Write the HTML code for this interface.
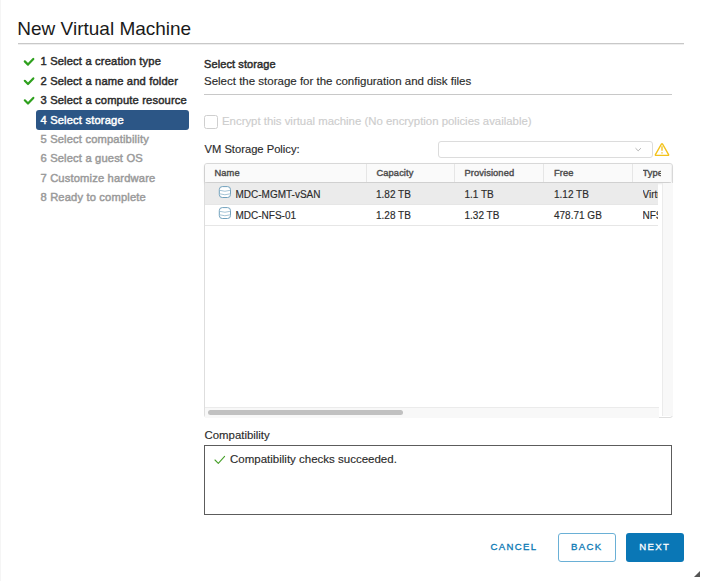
<!DOCTYPE html>
<html><head><meta charset="utf-8">
<style>
html,body{margin:0;padding:0;background:#fff;}
body{width:703px;height:581px;position:relative;overflow:hidden;font-family:"Liberation Sans",sans-serif;color:#333;}
.t{position:absolute;white-space:nowrap;line-height:1;-webkit-text-stroke-width:0.15px;}
.abs{position:absolute;}
</style></head><body>

<!-- faint window edges -->
<div class="abs" style="left:0;top:0;width:1px;height:581px;background:#f5f5f5"></div>

<!-- title -->
<div class="t" style="left:17.3px;top:19px;font-size:19px;color:#1a1a1a;-webkit-text-stroke-width:0">New Virtual Machine</div>
<div class="abs" style="left:18px;top:43px;width:666px;height:1px;background:#c8c8c8;box-shadow:0 1px 0 #eeeeee"></div>

<!-- nav -->
<svg class="abs" style="left:0;top:0" width="200" height="210">
  <g fill="none" stroke="#2ea01d" stroke-width="2.2" stroke-linecap="round" stroke-linejoin="round">
    <polyline points="24.8,61.4 28,64.6 33.3,59"/>
    <polyline points="24.8,80.8 28,84 33.3,78.4"/>
    <polyline points="24.8,100.3 28,103.5 33.3,97.9"/>
  </g>
</svg>
<div class="abs" style="left:35.5px;top:110px;width:153.5px;height:19.6px;background:#2c5686;border-radius:3px"></div>
<div class="t" style="left:40.5px;top:56.2px;font-size:11.2px;font-weight:400;letter-spacing:0.15px;-webkit-text-stroke-width:0.45px;color:#2b2b2b">1 Select a creation type</div>
<div class="t" style="left:40.5px;top:75.6px;font-size:11.2px;font-weight:400;letter-spacing:0.15px;-webkit-text-stroke-width:0.45px;color:#2b2b2b">2 Select a name and folder</div>
<div class="t" style="left:40.5px;top:95.1px;font-size:11.2px;font-weight:400;letter-spacing:0.15px;-webkit-text-stroke-width:0.45px;color:#2b2b2b">3 Select a compute resource</div>
<div class="t" style="left:40.5px;top:114.6px;font-size:11.2px;font-weight:400;letter-spacing:0.15px;-webkit-text-stroke-width:0.45px;color:#fff">4 Select storage</div>
<div class="t" style="left:40.5px;top:134.2px;font-size:11.2px;font-weight:400;letter-spacing:0.15px;-webkit-text-stroke-width:0.45px;color:#9a9a9a">5 Select compatibility</div>
<div class="t" style="left:40.5px;top:153.1px;font-size:11.2px;font-weight:400;letter-spacing:0.15px;-webkit-text-stroke-width:0.45px;color:#9a9a9a">6 Select a guest OS</div>
<div class="t" style="left:40.5px;top:172.7px;font-size:11.2px;font-weight:400;letter-spacing:0.15px;-webkit-text-stroke-width:0.45px;color:#9a9a9a">7 Customize hardware</div>
<div class="t" style="left:40.5px;top:192.0px;font-size:11.2px;font-weight:400;letter-spacing:0.15px;-webkit-text-stroke-width:0.45px;color:#9a9a9a">8 Ready to complete</div>

<!-- content header -->
<div class="t" style="left:204px;top:59px;font-size:11px;font-weight:400;letter-spacing:0.1px;-webkit-text-stroke-width:0.45px;color:#2b2b2b">Select storage</div>
<div class="t" style="left:204px;top:76.2px;font-size:11.5px;color:#2b2b2b">Select the storage for the configuration and disk files</div>
<div class="abs" style="left:204px;top:94px;width:468px;height:1px;background:#c8c8c8"></div>

<!-- encrypt -->
<div class="abs" style="left:204px;top:115px;width:11.5px;height:11.5px;border:1px solid #cfcfcf;border-radius:2.5px"></div>
<div class="t" style="left:222px;top:116.3px;font-size:11.4px;color:#cdcdcd">Encrypt this virtual machine (No encryption policies available)</div>

<!-- policy -->
<div class="t" style="left:204.5px;top:144.4px;font-size:11.2px;color:#2b2b2b">VM Storage Policy:</div>
<div class="abs" style="left:437.5px;top:141.2px;width:213.5px;height:14.8px;border:1px solid #dcdcdc;border-radius:3px"></div>
<svg class="abs" style="left:625px;top:138px" width="50" height="24">
  <polyline points="10.5,10.2 13.2,12.8 15.9,10.2" fill="none" stroke="#b5b5b5" stroke-width="1"/>
  <path d="M37,5.9 Q37.3,5.6 37.6,6.1 L43.6,16.6 Q43.9,17.3 43.2,17.3 L30.8,17.3 Q30.1,17.3 30.4,16.6 L36.4,6.1 Q36.7,5.6 37,5.9 Z" fill="none" stroke="#f3c21c" stroke-width="1.35" stroke-linejoin="round"/>
  <line x1="37" y1="8.3" x2="37" y2="12.8" stroke="#f3c21c" stroke-width="1.35"/>
  <line x1="37" y1="14.2" x2="37" y2="15.4" stroke="#f3c21c" stroke-width="1.35"/>
</svg>

<!-- table -->
<div class="abs" style="left:204px;top:163px;width:466.5px;height:252.5px;border:1px solid #dedede;border-radius:3px;background:#fff"></div>
<!-- header -->
<div class="abs" style="left:205px;top:164px;width:466px;height:18px;background:#fafafa;border-radius:2px 2px 0 0;box-shadow:0 1px 0 rgba(0,0,0,0.08),0 1px 3px rgba(0,0,0,0.18)"></div>
<div class="abs" style="left:366px;top:164px;width:1px;height:18px;background:#e6e6e6"></div>
<div class="abs" style="left:454px;top:164px;width:1px;height:18px;background:#e6e6e6"></div>
<div class="abs" style="left:543px;top:164px;width:1px;height:18px;background:#e6e6e6"></div>
<div class="abs" style="left:632px;top:164px;width:1px;height:18px;background:#e6e6e6"></div>
<div class="t" style="left:214.5px;top:168.9px;font-size:9.3px;font-weight:400;letter-spacing:0.1px;-webkit-text-stroke-width:0.4px;color:#4d4d4d">Name</div>
<div class="t" style="left:376.5px;top:168.9px;font-size:9.3px;font-weight:400;letter-spacing:0.1px;-webkit-text-stroke-width:0.4px;color:#4d4d4d">Capacity</div>
<div class="t" style="left:464.5px;top:168.9px;font-size:9.3px;font-weight:400;letter-spacing:0.1px;-webkit-text-stroke-width:0.4px;color:#4d4d4d">Provisioned</div>
<div class="t" style="left:554px;top:168.9px;font-size:9.3px;font-weight:400;letter-spacing:0.1px;-webkit-text-stroke-width:0.4px;color:#4d4d4d">Free</div>
<div class="t" style="left:642.5px;top:168.9px;font-size:9.3px;font-weight:400;letter-spacing:0.1px;-webkit-text-stroke-width:0.4px;color:#4d4d4d;width:18px;overflow:hidden">Type</div>

<!-- rows -->
<div class="abs" style="left:205px;top:182.5px;width:453px;height:21.5px;background:#ebebeb"></div>
<div class="abs" style="left:205px;top:225px;width:453px;height:1px;background:#e6e6e6"></div>
<div class="abs" style="left:205px;top:204px;width:453px;height:1px;background:#e6e6e6"></div>

<svg class="abs" style="left:214px;top:182px" width="22" height="40">
  <g fill="#fff" stroke="#70a0bc" stroke-width="1">
    <rect x="5.3" y="4.6" width="11.2" height="10.9" rx="3"/>
    <rect x="5.3" y="25.6" width="11.2" height="10.9" rx="3"/>
  </g>
  <g fill="none" stroke="#9bbdd1" stroke-width="0.9">
    <path d="M5.6,8.3 Q10.9,10.2 16.2,8.3 M5.6,11.8 Q10.9,13.7 16.2,11.8"/>
    <path d="M5.6,29.3 Q10.9,31.2 16.2,29.3 M5.6,32.8 Q10.9,34.7 16.2,32.8"/>
  </g>
</svg>
<div class="t" style="left:235.5px;top:189.9px;font-size:10px;color:#2b2b2b">MDC-MGMT-vSAN</div>
<div class="t" style="left:235.5px;top:210.6px;font-size:10px;color:#2b2b2b">MDC-NFS-01</div>
<div class="t" style="left:376px;top:189.9px;font-size:10px;color:#2b2b2b">1.82 TB</div>
<div class="t" style="left:376px;top:210.6px;font-size:10px;color:#2b2b2b">1.28 TB</div>
<div class="t" style="left:464.5px;top:189.9px;font-size:10px;color:#2b2b2b">1.1 TB</div>
<div class="t" style="left:464.5px;top:210.6px;font-size:10px;color:#2b2b2b">1.32 TB</div>
<div class="t" style="left:554px;top:189.9px;font-size:10px;color:#2b2b2b">1.12 TB</div>
<div class="t" style="left:554px;top:210.6px;font-size:10px;color:#2b2b2b">478.71 GB</div>
<div class="t" style="left:642.5px;top:189.9px;font-size:10px;color:#2b2b2b;width:15.5px;overflow:hidden">Virtual</div>
<div class="t" style="left:642.5px;top:210.6px;font-size:10px;color:#2b2b2b;width:15.5px;overflow:hidden">NFS</div>

<!-- scrollbars -->
<div class="abs" style="left:661.5px;top:182.5px;width:10px;height:233.5px;background:#f8f8f8;border-left:1px solid #ebebeb"></div>
<div class="abs" style="left:205px;top:407px;width:453.5px;height:9.5px;background:#f8f8f8;border-top:1px solid #ebebeb"></div>
<div class="abs" style="left:207.5px;top:410px;width:195px;height:5px;background:#c1c1c1;border-radius:3px"></div>

<!-- compatibility -->
<div class="t" style="left:204.5px;top:429.5px;font-size:11.4px;color:#2b2b2b">Compatibility</div>
<div class="abs" style="left:204px;top:444.5px;width:466px;height:68.5px;border:1px solid #5c5c5c"></div>
<svg class="abs" style="left:210px;top:450px" width="20" height="20">
  <polyline points="5,10 8.3,13.3 14.6,6.3" fill="none" stroke="#48a02a" stroke-width="1.1" stroke-linecap="round" stroke-linejoin="round"/>
</svg>
<div class="t" style="left:230px;top:454px;font-size:11.5px;color:#2b2b2b">Compatibility checks succeeded.</div>

<!-- buttons -->
<div class="t" style="left:490.6px;top:542.4px;font-size:9.6px;font-weight:400;letter-spacing:1.3px;-webkit-text-stroke-width:0.3px;color:#0a79b4">CANCEL</div>
<div class="abs" style="left:557.5px;top:532.5px;width:56.5px;height:27px;border:1px solid #6ab0d6;border-radius:3px"></div>
<div class="t" style="left:571px;top:542.4px;font-size:9.6px;font-weight:400;letter-spacing:1.3px;-webkit-text-stroke-width:0.3px;color:#0a79b4">BACK</div>
<div class="abs" style="left:625.5px;top:532.5px;width:58.5px;height:29px;background:#0a77b6;border-radius:3px"></div>
<div class="t" style="left:639.3px;top:542.4px;font-size:9.6px;font-weight:400;letter-spacing:1.3px;-webkit-text-stroke-width:0.3px;color:#fff">NEXT</div>

<!-- resize grip -->
<svg class="abs" style="left:690.5px;top:568px" width="12" height="12">
  <path d="M3,9 L9,3 L9,9 Z" fill="#555"/>
</svg>
</body></html>
